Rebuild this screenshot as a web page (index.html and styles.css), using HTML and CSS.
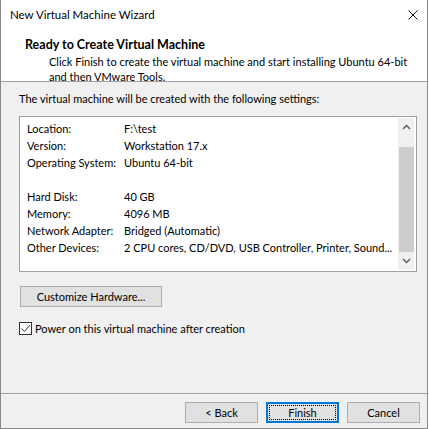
FILE: index.html
```html
<!DOCTYPE html>
<html lang="en">
<head>
    <meta charset="UTF-8">
    <title>New Virtual Machine Wizard</title>
    <link rel="stylesheet" href="styles.css">
</head>
<body>
    <div class="window">
        <div class="titlebar">
            <span class="title">New Virtual Machine Wizard</span>
            <svg class="close" width="10" height="10" viewBox="0 0 10 10">
                <path d="M0.5 0.5 L9.5 9.5 M9.5 0.5 L0.5 9.5" stroke="#111" stroke-width="1"/>
            </svg>
        </div>

        <div class="header">
            <div class="heading">Ready to Create Virtual Machine</div>
            <div class="desc">Click Finish to create the virtual machine and start installing Ubuntu 64-bit<br>and then VMware Tools.</div>
        </div>

        <div class="content">
            <p class="intro">The virtual machine will be created with the following settings:</p>

            <div class="listbox">
                <div class="rows">
                    <div class="row"><span class="key">Location:</span><span>F:\test</span></div>
                    <div class="row"><span class="key">Version:</span><span>Workstation 17.x</span></div>
                    <div class="row"><span class="key">Operating System:</span><span>Ubuntu 64-bit</span></div>
                    <div class="row"></div>
                    <div class="row"><span class="key">Hard Disk:</span><span>40 GB</span></div>
                    <div class="row"><span class="key">Memory:</span><span>4096 MB</span></div>
                    <div class="row"><span class="key">Network Adapter:</span><span>Bridged (Automatic)</span></div>
                    <div class="row"><span class="key">Other Devices:</span><span>2 CPU cores, CD/DVD, USB Controller, Printer, Sound...</span></div>
                </div>
                <div class="scrollbar">
                    <svg class="arrow" width="9" height="6" viewBox="0 0 9 6">
                        <path d="M1 5 L4.5 1.5 L8 5" fill="none" stroke="#606060" stroke-width="1.5"/>
                    </svg>
                    <div class="thumb"></div>
                    <svg class="arrow" width="9" height="6" viewBox="0 0 9 6">
                        <path d="M1 1 L4.5 4.5 L8 1" fill="none" stroke="#606060" stroke-width="1.5"/>
                    </svg>
                </div>
            </div>

            <button class="btn customize">Customize Hardware...</button>

            <label class="check">
                <span class="box">
                    <svg width="11" height="11" viewBox="0 0 11 11">
                        <path d="M1.5 5.5 L4.5 8.5 L10 2" fill="none" stroke="#333" stroke-width="1"/>
                    </svg>
                </span>
                Power on this virtual machine after creation
            </label>
        </div>

        <div class="footer">
            <button class="btn">&lt; Back</button>
            <button class="btn default"><span class="focus">Finish</span></button>
            <button class="btn">Cancel</button>
        </div>
    </div>
</body>
</html>
```

FILE: styles.css
```css
body {
    margin: 0;
    font-family: Lato, 'Noto Sans', sans-serif;
    font-size: 11px;
    color: #000;
    background: #fff;
}
.window {
    width: 428px;
    height: 429px;
    box-sizing: border-box;
    border: 1px solid #888;
    border-top: none;
    background: #f0f0f0;
    display: flex;
    flex-direction: column;
}
.titlebar {
    height: 30px;
    flex-shrink: 0;
    background: #fff;
    display: flex;
    align-items: center;
    justify-content: space-between;
    padding: 0 9px 0 9px;
}
.title {
    font-size: 11.5px;
    margin-top: -2px;
}
.close {
    margin-top: -1px;
}
.header {
    background: #fff;
    height: 51px;
    flex-shrink: 0;
    border-bottom: 1px solid #a0a0a0;
    padding-left: 24px;
}
.heading {
    font-weight: bold;
    font-size: 12.5px;
    line-height: 16px;
    margin-top: 7px;
}
.desc {
    padding-left: 24px;
    margin-top: 1px;
    line-height: 15px;
}
.content {
    flex: 1;
    padding: 0 10px 0 18px;
}
.intro {
    margin: 9px 0 9px 0;
    line-height: 16px;
}
.listbox {
    width: 398px;
    height: 156px;
    box-sizing: border-box;
    border: 1px solid #a0a0a0;
    background: #fff;
    display: flex;
    padding: 1px 2px 1px 0;
}
.rows {
    flex: 1;
    min-width: 0;
    overflow: hidden;
    padding: 2px 0 0 7px;
}
.row {
    display: flex;
    height: 17px;
    line-height: 17px;
    white-space: nowrap;
}
.key {
    width: 97px;
    flex-shrink: 0;
}
.scrollbar {
    width: 16px;
    flex-shrink: 0;
    background: #f0f0f0;
    display: flex;
    flex-direction: column;
    align-items: center;
    justify-content: space-between;
}
.arrow {
    margin: 6px 0;
    flex-shrink: 0;
}
.thumb {
    width: 15px;
    flex: 1;
    background: #cdcdcd;
    margin-top: 11px;
    max-height: 106px;
}
.btn {
    font-family: inherit;
    font-size: 11px;
    background: #e1e1e1;
    border: 1px solid #adadad;
    color: #000;
    padding: 0;
    height: 21px;
    width: 73px;
    cursor: default;
}
.customize {
    width: 142px;
    margin: 14px 0 0 1px;
    display: block;
}
.check {
    display: flex;
    align-items: center;
    margin-top: 14px;
    height: 15px;
}
.box {
    width: 13px;
    height: 13px;
    box-sizing: border-box;
    border: 1px solid #333;
    background: #fff;
    display: flex;
    align-items: center;
    justify-content: center;
    margin-right: 3px;
}
.box svg {
    display: block;
}
.footer {
    height: 35px;
    flex-shrink: 0;
    box-sizing: border-box;
    border-top: 1px solid #a0a0a0;
    display: flex;
    justify-content: flex-end;
    gap: 8px;
    padding: 8px 7px 0 0;
}
.default {
    border: 2px solid #0078d7;
    padding: 1px;
}
.focus {
    display: flex;
    align-items: center;
    justify-content: center;
    height: 100%;
    outline: 1px dotted #000;
    outline-offset: -1px;
}
```
